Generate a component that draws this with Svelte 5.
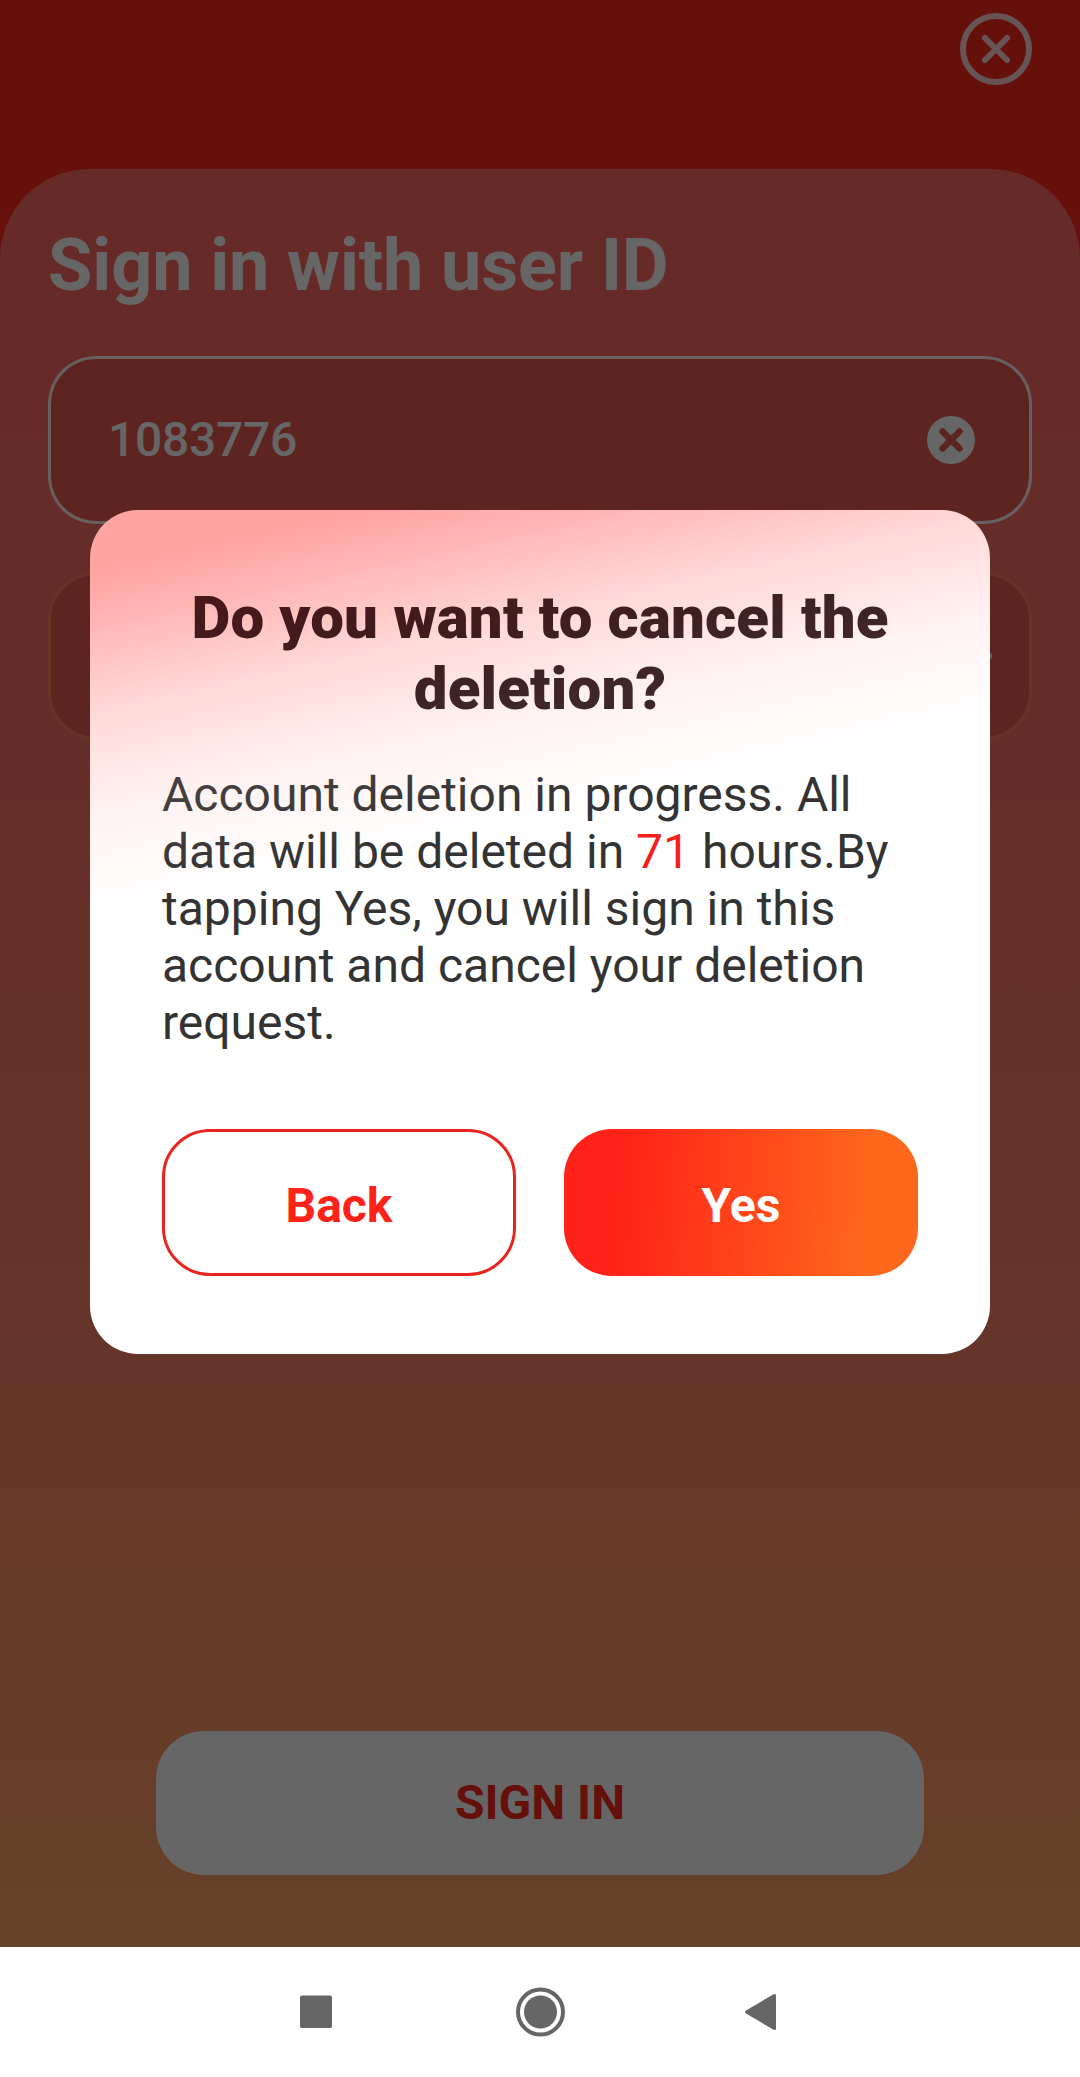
<script lang="ts">
  let userId = '1083776';
  let hoursLeft = 71;
  let dialogOpen = true;

  function clearUserId() {
    userId = '';
  }

  function closeDialog() {
    dialogOpen = false;
  }
</script>

<div class="screen">
  <div class="app">
    <header class="topbar">
      <button class="icon-btn" aria-label="Close">
        <svg width="72" height="72" viewBox="0 0 72 72" fill="none" stroke="#fff" stroke-width="6" stroke-linecap="round">
          <circle cx="36" cy="36" r="33" />
          <path d="M25 25L47 47M47 25L25 47" />
        </svg>
      </button>
    </header>

    <main class="panel">
      <h1>Sign in with user ID</h1>
      <div class="field active">
        <span class="value">{userId}</span>
        <button class="icon-btn" aria-label="Clear" on:click={clearUserId}>
          <svg width="48" height="48" viewBox="0 0 48 48">
            <circle cx="24" cy="24" r="24" fill="#fff" />
            <path d="M15.5 15.5L32.5 32.5M32.5 15.5L15.5 32.5" stroke="#e65d52" stroke-width="6.5" stroke-linecap="round" />
          </svg>
        </button>
      </div>
      <div class="field">
        <span class="value"></span>
        <svg class="eye" width="60" height="36" viewBox="0 0 60 36">
          <path d="M3 18C16 -2 44 -2 57 18C44 38 16 38 3 18Z" fill="none" stroke="#fff" stroke-width="6" stroke-linejoin="round" />
          <circle cx="30" cy="18" r="8" fill="#fff" />
        </svg>
      </div>
      <button class="signin">SIGN IN</button>
    </main>

    {#if dialogOpen}
      <div class="mask">
        <div class="dialog" role="dialog" aria-modal="true">
          <h2>Do you want to cancel the deletion?</h2>
          <p>
            Account deletion in progress. All data will be deleted in <em>{hoursLeft}</em> hours.By tapping Yes, you will sign in this account and cancel your deletion request.
          </p>
          <div class="actions">
            <button class="btn btn-outline" on:click={closeDialog}>Back</button>
            <button class="btn btn-primary" on:click={closeDialog}>Yes</button>
          </div>
        </div>
      </div>
    {/if}
  </div>

  <nav class="navbar">
    <svg width="480" height="50" viewBox="0 0 480 50" fill="#666">
      <rect x="0" y="8.5" width="32" height="32.5" rx="2" />
      <circle cx="240.5" cy="25" r="22.5" fill="none" stroke="#666" stroke-width="4" />
      <circle cx="240.5" cy="25" r="16.5" />
      <path d="M446 23.500L474 7Q476 6.500 476 8.500V41.500Q476 43.500 474 43L446 26.500Q444 25 446 23.500Z" />
    </svg>
  </nav>
</div>

<style>
  :global(body) {
    margin: 0;
  }

  .screen {
    display: flex;
    flex-direction: column;
    width: 1080px;
    height: 2077px;
    overflow: hidden;
    font-family: Roboto, "Liberation Sans", sans-serif;
    background: #fff;
  }

  button {
    padding: 0;
    border: 0;
    background: none;
    font-family: inherit;
    cursor: pointer;
  }

  svg {
    display: block;
  }

  .app {
    position: relative;
    display: flex;
    flex-direction: column;
    height: 1947px;
    background: linear-gradient(180deg, #ff2820 5%, #ff3723 38%, #ff5025 70%, #ff6925 85%, #ff7728 97%);
  }

  .topbar {
    box-sizing: border-box;
    display: flex;
    justify-content: flex-end;
    height: 169px;
    padding: 13px 48px 0;
  }

  .topbar .icon-btn {
    height: 72px;
    opacity: 0.8;
  }

  .panel {
    flex: 1;
    box-sizing: border-box;
    display: flex;
    flex-direction: column;
    padding: 55px 48px 72px;
    border-radius: 90px 90px 0 0;
    background: rgba(255, 255, 255, 0.3);
  }

  h1 {
    margin: 0 0 48px;
    font-size: 72px;
    line-height: 84px;
    font-weight: 700;
    letter-spacing: -0.12px;
    color: #fff;
  }

  .field {
    box-sizing: border-box;
    display: flex;
    align-items: center;
    justify-content: space-between;
    height: 168px;
    margin-bottom: 48px;
    padding: 0 54px 0 57px;
    border: 3px solid rgba(255, 170, 70, 0.3);
    border-radius: 48px;
    background: rgba(135, 0, 0, 0.18);
    background-clip: padding-box;
  }

  .field.active {
    border-color: rgba(255, 255, 255, 0.9);
  }

  .value {
    margin-top: -2px;
    font-size: 48px;
    font-weight: 500;
    letter-spacing: -0.3px;
    color: #fff;
  }

  .eye {
    margin-right: -17px;
  }

  .signin {
    align-self: center;
    width: 768px;
    height: 144px;
    margin-top: auto;
    padding-bottom: 2px;
    border-radius: 48px;
    background: #fff;
    font-size: 48px;
    font-weight: 700;
    color: #ff2820;
  }

  /* dimmed layer behind the dialog */
  .mask {
    position: absolute;
    inset: 0;
    display: flex;
    align-items: flex-start;
    justify-content: center;
    background: rgba(0, 0, 0, 0.6);
  }

  .dialog {
    position: relative;
    box-sizing: border-box;
    width: 900px;
    height: 844px;
    margin-top: 510px;
    padding: 72px 72px 78px;
    display: flex;
    flex-direction: column;
    border-radius: 48px;
    background: linear-gradient(167.5deg, rgba(255, 0, 0, 0.24) 6%, rgba(255, 0, 0, 0.09) 20%, rgba(255, 0, 0, 0.03) 29%, rgba(255, 0, 0, 0) 39%) #fff;
    overflow: hidden;
  }

  /* second part of the red glow, laid over the text */
  .dialog::after {
    content: "";
    position: absolute;
    inset: 0;
    background: linear-gradient(167.5deg, rgba(255, 0, 0, 0.16) 6%, rgba(255, 80, 60, 0.09) 20%, rgba(255, 190, 185, 0.09) 29%, rgba(255, 255, 255, 0) 39%);
    pointer-events: none;
  }

  h2 {
    margin: 0 -10px;
    font-size: 60px;
    line-height: 71px;
    font-weight: 900;
    letter-spacing: 0.15px;
    text-align: center;
    color: #2c181b;
  }

  p {
    margin: 42px 0 0;
    font-size: 48px;
    line-height: 57px;
    color: #333;
  }

  em {
    font-style: normal;
    color: #f5201a;
  }

  .actions {
    display: grid;
    grid-template-columns: 1fr 1fr;
    gap: 48px;
    margin-top: auto;
  }

  .btn {
    box-sizing: border-box;
    height: 147px;
    padding-top: 6px;
    border-radius: 48px;
    font-size: 48px;
    font-weight: 700;
  }

  .btn-outline {
    border: 3px solid #e8241e;
    background: #fff;
    color: #ff2218;
  }

  .btn-primary {
    background: linear-gradient(93deg, #ff2218 16%, #ff681c 86%);
    color: #fff;
  }

  .navbar {
    flex: 1;
    display: flex;
    align-items: center;
    justify-content: center;
    background: #fff;
  }
</style>
